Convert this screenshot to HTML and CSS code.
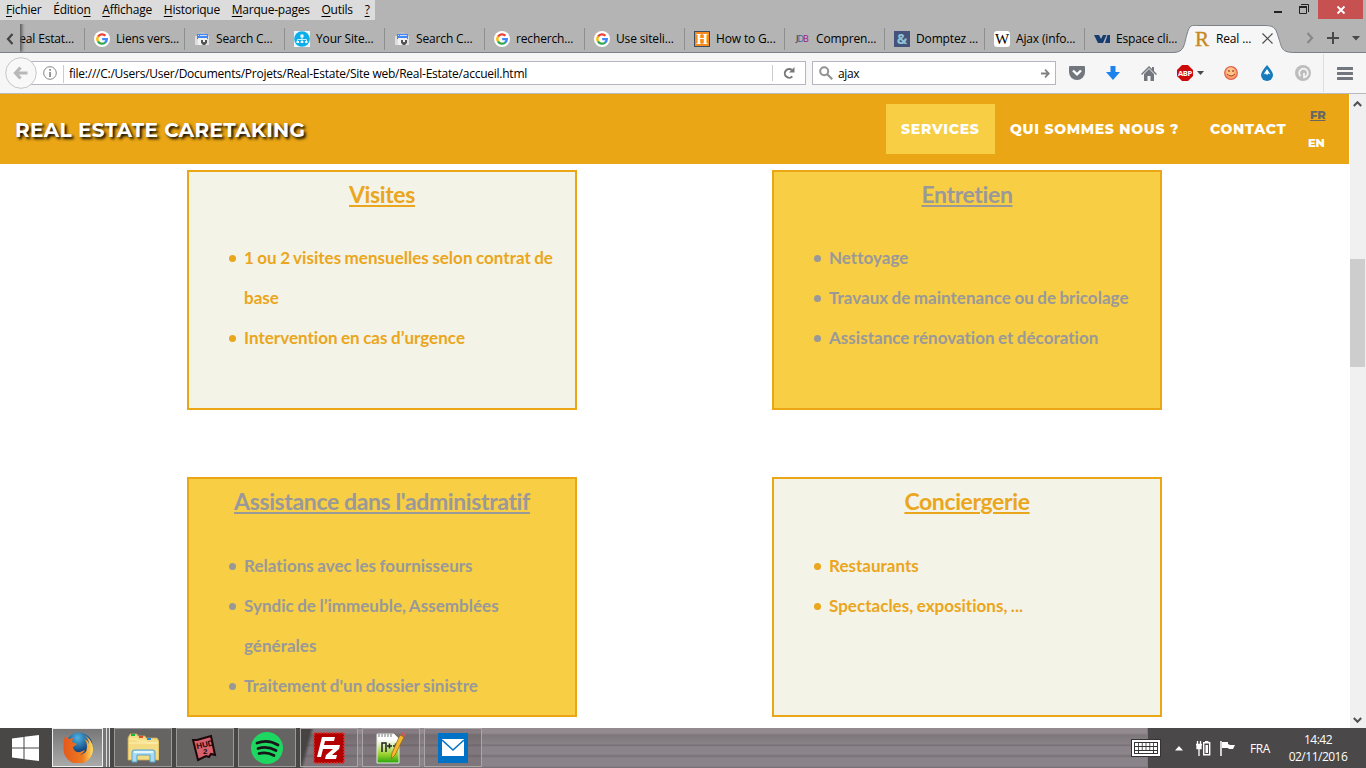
FILE: index.html
```html
<!DOCTYPE html>
<html lang="fr">
<head>
<meta charset="utf-8">
<title>Real Estate Caretaking</title>
<link rel="stylesheet" href="styles.css">
</head>
<body>
<svg width="0" height="0" class="defs">
  <symbol id="google" viewBox="0 0 16 16"><circle cx="8" cy="8" r="8" fill="#fff"/><g fill="none" stroke-width="2.3"><path d="M4 5.6A4.7 4.7 0 0 1 11.4 4.7" stroke="#ea4335"/><path d="M4.2 5.3a4.7 4.7 0 0 0 0 5.4" stroke="#fbbc05"/><path d="M4 10.4a4.7 4.7 0 0 0 7.2 1.1" stroke="#34a853"/><path d="M8.2 8.1h4.6a4.7 4.7 0 0 1-1.7 3.5" stroke="#4285f4"/></g></symbol>
  <symbol id="console" viewBox="0 0 16 16"><path d="M5 2.500q3-2 6 0" stroke="#c8c8c8" fill="none"/><path d="M1 5h14v9H1z" fill="#dedede"/><path d="M3 3h11v5H3z" fill="#4285f4"/><path d="M4 4h1v1H4zm2 0h7v1H6z" fill="#cfe0ff"/><path d="M4 7h9v7H4z" fill="#f0f0f0"/><path d="M7 9v3l2 2h2l2-2V9h-2v2H9V9z" fill="#555"/></symbol>
</svg>

<div class="menubar">
  <nav class="menus"><span><u>F</u>ichier</span><span>Éditio<u>n</u></span><span><u>A</u>ffichage</span><span><u>H</u>istorique</span><span><u>M</u>arque-pages</span><span><u>O</u>utils</span><span><u>?</u></span></nav>
  <div class="wincontrols">
    <svg width="8" height="20"><path d="M0 11h8v2H0z" fill="#222"/></svg>
    <svg width="12" height="20"><path d="M.5 7.500h7v6h-7zM2 4.500h7.500V12" fill="none" stroke="#222"/><path d="M0 6h8v2H0z" fill="#222"/></svg>
    <span class="close"><svg width="10" height="10" viewBox="0 0 10 10"><path d="M1.500 1.500l7 7m0-7l-7 7" stroke="#fff" stroke-width="1.800"/></svg></span>
  </div>
</div>

<div class="tabbar">
  <div class="tabscroll"><svg width="8" height="12" viewBox="0 0 8 12"><path d="M6.500 1L2 6l4.500 5" fill="none" stroke="#444" stroke-width="2.200"/></svg></div>
  <div class="tab cut"><span>Real Estat...</span></div>
  <div class="tab"><svg class="fav"><use href="#google"/></svg><span>Liens vers...</span></div>
  <div class="tab"><svg class="fav"><use href="#console"/></svg><span>Search C...</span></div>
  <div class="tab"><svg class="fav" viewBox="0 0 16 16"><path d="M0 0h16v16H0z" fill="#eaf8fd"/><circle cx="8" cy="8" r="7.800" fill="#09aeea"/><path d="M8 6v3M3.500 11V8.500h9V11M8 9v2" stroke="#c9f0ff" fill="none"/><path d="M6.500 3.500h3v3h-3zM2.500 10h2.500v2H2.500zm4.200 0h2.600v2H6.700zm4.300 0h2.500v2H11z" fill="#fff"/></svg><span>Your Site...</span></div>
  <div class="tab"><svg class="fav"><use href="#console"/></svg><span>Search C...</span></div>
  <div class="tab"><svg class="fav"><use href="#google"/></svg><span>recherch...</span></div>
  <div class="tab"><svg class="fav"><use href="#google"/></svg><span>Use siteli...</span></div>
  <div class="tab"><i class="fav favh">H</i><span>How to G...</span></div>
  <div class="tab"><i class="fav favj">J<b>D</b><em>B</em></i><span>Compren...</span></div>
  <div class="tab"><i class="fav fava">&amp;</i><span>Domptez ...</span></div>
  <div class="tab"><i class="fav favw">W</i><span>Ajax (info...</span></div>
  <div class="tab last"><svg class="fav" viewBox="0 0 16 16"><path d="M0 4h5l2 4 2-4h3.500L9 12H4zM13.500 4H16v8h-5z" fill="#173d70"/></svg><span>Espace cli...</span></div>
  <div class="tab active"><svg class="shape" width="124" height="33" viewBox="0 0 124 33"><path d="M0 32.500C12 32.500 11 24 14 14S18 5.500 26 5.500H92C103 5.500 103 10 106 19S108 32.500 122 32.500V33H0z" fill="#f6f6f7"/><path d="M0 32.500C12 32.500 11 24 14 14S18 5.500 26 5.500H92C103 5.500 103 10 106 19S108 32.500 122 32.500" fill="none" stroke="#7c8189"/></svg><i class="fav favr">R</i><span>Real ...</span><svg class="x" width="11" height="11" viewBox="0 0 11 11"><path d="M.5.5l10 10m0-10l-10 10" stroke="#4c4c4c" stroke-width="1.200"/></svg></div>
  <div class="tabtools">
    <svg width="8" height="12" viewBox="0 0 8 12"><path d="M1.500 1L6 6l-4.500 5" fill="none" stroke="#888" stroke-width="2.200"/></svg>
    <svg width="12" height="12" viewBox="0 0 12 12"><path d="M6 0v12M0 6h12" stroke="#484848" stroke-width="2"/></svg>
    <svg width="8" height="5" viewBox="0 0 8 5"><path d="M0 0h8L4 4.500z" fill="#484848"/></svg>
  </div>
</div>

<div class="toolbar">
  <svg class="back" width="32" height="32" viewBox="0 0 32 32"><circle cx="16" cy="16" r="15.300" fill="#f8f8f8" stroke="#c6c6c8"/><path d="M15.500 10.500L10.500 16l5 5.500M11 16h11.500" fill="none" stroke="#b8b8b8" stroke-width="3.200"/></svg>
  <div class="url">
    <svg width="14" height="14" viewBox="0 0 14 14"><circle cx="7" cy="7" r="6.300" fill="none" stroke="#858585"/><path d="M6.200 6h1.700v5H6.200zM6.200 3h1.700v1.700H6.200z" fill="#858585"/></svg>
    <span class="address">file:///C:/Users/User/Documents/Projets/Real-Estate/Site web/Real-Estate/accueil.html</span>
    <span class="reload"><svg width="12" height="12" viewBox="0 0 12 12"><path d="M9 3.200A4.300 4.300 0 1 0 9.300 9.300" fill="none" stroke="#787878" stroke-width="2"/><path d="M11.500 0v5.500H6z" fill="#787878"/></svg></span>
  </div>
  <div class="search">
    <svg width="14" height="14" viewBox="0 0 14 14"><circle cx="5.200" cy="5.200" r="4" fill="none" stroke="#929292" stroke-width="2"/><path d="M8 8l5.200 5.200" stroke="#929292" stroke-width="2.200"/></svg>
    <span>ajax</span>
    <svg class="go" width="9" height="9" viewBox="0 0 9 9"><path d="M0 4.500h7.500M4 .7l3.800 3.800L4 8.300" fill="none" stroke="#808080" stroke-width="1.800"/></svg>
  </div>
  <div class="tools">
    <svg width="16" height="14" viewBox="0 0 16 14"><path d="M1 0h14q1 0 1 1v5a8 8 0 0 1-16 0V1q0-1 1-1z" fill="#72767d"/><path d="M4 4.500l4 3.800 4-3.800" fill="none" stroke="#fff" stroke-width="2.400"/></svg>
    <svg width="14" height="14" viewBox="0 0 14 14"><path d="M4.500 0h5v6H14l-7 8-7-8h4.500z" fill="#1a83ee"/></svg>
    <svg width="16" height="15" viewBox="0 0 16 15"><path d="M0 8l8-8 3 3V1h2v4l3 3-1 1-7-7-7 7z" fill="#72767d"/><path d="M3 8l5-5 5 5v7H9.500v-5h-3v5H3z" fill="#72767d"/></svg>
    <svg class="abp" width="27" height="16" viewBox="0 0 27 16"><path d="M5 0h6l5 5v6l-5 5H5l-5-5V5z" fill="#cd0a0a"/><text x="8" y="10.800" text-anchor="middle" fill="#fff">ABP</text><path d="M20 6h7l-3.500 4z" fill="#484848"/></svg>
    <svg width="14" height="14" viewBox="0 0 14 14"><circle cx="7" cy="7" r="6.300" fill="#ffa468" stroke="#e0604e" stroke-width="1.200"/><circle cx="6.500" cy="5.500" r="4" fill="#ffc58a"/><circle cx="5" cy="5" r=".9" fill="#a4482c"/><circle cx="9" cy="5" r=".9" fill="#a4482c"/><path d="M3 8q4 4 8 0" fill="none" stroke="#ab4632"/></svg>
    <svg width="12" height="16" viewBox="0 0 12 16"><path d="M6 0q6 7 6 10a6 6 0 0 1-12 0Q0 7 6 0z" fill="#167bbd"/><path d="M6 4l3.500 5.500-2-1L6 10 4.500 8.500l-2 1z" fill="#fff"/></svg>
    <svg width="16" height="16" viewBox="0 0 16 16"><circle cx="8" cy="8" r="8" fill="#bdbdbd"/><path d="M5.600 11.200A4.300 4.300 0 1 1 9 12.300V8" fill="none" stroke="#f4f4f4" stroke-width="1.800"/></svg>
    <span class="burger"><svg width="16" height="13" viewBox="0 0 16 13"><path d="M1 1.500h14M1 6.500h14M1 11.500h14" stroke="#72767d" stroke-width="3" stroke-linecap="round"/></svg></span>
  </div>
</div>

<div class="viewport">
  <main class="page">
    <header class="site">
      <h1>REAL ESTATE CARETAKING</h1>
      <nav class="links"><a class="current"><span>SERVICES</span></a><a class="who"><span>QUI SOMMES NOUS ?</span></a><a class="contact"><span>CONTACT</span></a></nav>
      <div class="langs"><a class="fr">FR</a><a>EN</a></div>
    </header>
    <section class="cards">
      <article class="card"><h2>Visites</h2><ul><li>1 ou 2 visites mensuelles selon contrat de base</li><li>Intervention en cas d’urgence</li></ul></article>
      <article class="card gold"><h2>Entretien</h2><ul><li>Nettoyage</li><li>Travaux de maintenance ou de bricolage</li><li>Assistance rénovation et décoration</li></ul></article>
      <article class="card gold lower"><h2>Assistance dans l'administratif</h2><ul><li>Relations avec les fournisseurs</li><li>Syndic de l’immeuble, Assemblées générales</li><li>Traitement d'un dossier sinistre</li></ul></article>
      <article class="card lower"><h2>Conciergerie</h2><ul><li>Restaurants</li><li>Spectacles, expositions, ...</li></ul></article>
    </section>
  </main>
  <aside class="scrollbar">
    <svg width="9" height="6" viewBox="0 0 9 6"><path d="M.8 5l3.700-3.800L8.200 5" fill="none" stroke="#505050" stroke-width="2"/></svg>
    <div class="thumb"></div>
    <svg width="9" height="6" viewBox="0 0 9 6"><path d="M.8 1l3.700 3.800L8.200 1" fill="none" stroke="#505050" stroke-width="2"/></svg>
  </aside>
</div>

<footer class="taskbar">
  <div class="start"><svg width="27" height="26" viewBox="0 0 27 26"><path d="M0 3.500L11.500 2v10.500H0zM12.500 1.800L27 0v12.500H12.500zM0 13.500h11.500V24L0 22.500zM12.500 13.500H27V26l-14.500-1.800z" fill="#fff"/></svg></div>
  <div class="task firefox"><svg width="30" height="31" viewBox="0 0 30 31"><defs><radialGradient id="blue" cx=".45" cy=".2"><stop offset="0" stop-color="#4fb4e4"/><stop offset="1" stop-color="#124681"/></radialGradient><linearGradient id="fox" x2="1"><stop offset="0" stop-color="#e5581c"/><stop offset=".65" stop-color="#ee7b20"/><stop offset="1" stop-color="#ffdf63"/></linearGradient></defs><circle cx="16" cy="14" r="13.500" fill="url(#blue)"/><path d="M2 4q2 2 4 3l4-1-1 4 5 2-4 3q1 6 7 5l5-2q-2 5-8 5 10 0 10-8 0-6-3-8 4 1 5 5 0-5-5-9 9 5 9 14A14.700 14.700 0 0 1 .5 17Q0 10 2 4z" fill="url(#fox)"/></svg></div>
  <div class="stack"></div>
  <div class="task"><svg width="32" height="30" viewBox="0 0 32 30"><path d="M1 5l2-4h7l1 2h7l1 2h11l2 3v19H1z" fill="#f3dc83" stroke="#c9a850" stroke-width=".8"/><path d="M2 6h8l1 2h8l1 2h11M2 10h28" stroke="#fff1b3" fill="none"/><path d="M4 1h4v2H4z" fill="#15b93b"/><path d="M12 3h4v2h-4z" fill="#e04a2b"/><path d="M20 5h4v2h-4z" fill="#2a8fe4"/><path d="M5 19q0-2 2-2h19q2 0 2 2v10h-5v-7H10v7H5z" fill="#a9daf0" stroke="#5ba4ca"/><path d="M7 18h19v2H7z" fill="#e4f7ff"/></svg></div>
  <div class="task"><svg class="hud" width="28" height="28" viewBox="0 0 28 28"><path d="M2 6l4 0 14-4 4 19-4-1-2 3-3-1-8 4z" fill="#d8616b" stroke="#1c080b" stroke-width="2"/><text x="6" y="15" transform="rotate(-12 6 15)">HUD</text><text x="12" y="20">2</text></svg></div>
  <div class="task"><svg width="32" height="32" viewBox="0 0 32 32"><circle cx="16" cy="16" r="16" fill="#1ed760"/><path d="M6 11q11-4 21 2M7 16.500q9-3 18 2M8 21.500q8-2 15 2" fill="none" stroke="#171717" stroke-width="2.800" stroke-linecap="round"/></svg></div>
  <div class="task"><svg width="32" height="32" viewBox="0 0 32 32"><path d="M1 1h30v30H1z" fill="#b30000" stroke="#d43434" stroke-width="1.500" stroke-dasharray="2 1"/><path d="M9 5h13l-1 4h-9l-1 4h6l-1 4h-6l-2 8H4zM15 13h12l-1 4-7 6h5l-1 4H12l1-4 7-6h-6z" fill="#fff"/></svg></div>
  <div class="task"><svg width="30" height="32" viewBox="0 0 30 32"><defs><linearGradient id="npp" y2="1" x2="0"><stop offset=".2" stop-color="#fff"/><stop offset=".7" stop-color="#9bd22e"/><stop offset="1" stop-color="#25a40b"/></linearGradient></defs><path d="M1 2h17l5 5v24H1z" fill="url(#npp)" stroke="#e4eadf"/><path d="M3 2v3m3-3v3m3-3v3m3-3v3m3-3v3" stroke="#777"/><path d="M6 20v-9h4v9M11 14h5m-2.500-2.500v5M17 14h5m-2.500-2.500v5" stroke="#222" stroke-width="1.500" fill="none"/><path d="M24 3l4 2-9 18-4 4 1-6z" fill="#f6b92c" stroke="#97671b" stroke-width=".8"/><path d="M25 2l1-2 4 2-1 3z" fill="#cf5665"/></svg></div>
  <div class="task"><svg width="30" height="30" viewBox="0 0 30 30"><path d="M0 0h30v30H0z" fill="#0072c6"/><path d="M4 6h22v17H4z" fill="#fff"/><path d="M4 7l11 10 11-10" fill="none" stroke="#0072c6" stroke-width="1.600"/></svg></div>
  <div class="tray">
    <svg class="kbd" width="28" height="16" viewBox="0 0 28 16"><path d="M0 0h28v16H0z" fill="#fff"/><path d="M2 2h24v12H2z" fill="#333"/><path d="M3 4.500h22M3 8.500h22" stroke="#fff" stroke-width="3" stroke-dasharray="3 .8"/><path d="M3 12h3m1 0h14m1 0h3" stroke="#fff" stroke-width="2.200"/></svg>
    <svg class="up" width="8" height="5" viewBox="0 0 8 5"><path d="M4 0l4 4.500H0z" fill="#fff"/></svg>
    <svg class="bat" width="15" height="16" viewBox="0 0 15 16"><path d="M1.500 1v3m3-3v3M0 4.500h6M3 5v11M1 5.500h4v3H1z" fill="#fff" stroke="#fff" stroke-width="1.300"/><path d="M7.700 2.700h6v12h-6z" fill="none" stroke="#fff" stroke-width="1.400"/><path d="M9 1h3.500v1H9zM9.500 5h2.500v8H9.500z" fill="#fff"/></svg>
    <svg class="flag" width="15" height="16" viewBox="0 0 15 16"><path d="M1 1v15" stroke="#fff" stroke-width="1.500"/><path d="M2 2h6v2l2 1h5l-2 4H9L8 8H2z" fill="#fff"/></svg>
    <span class="lang">FRA</span>
    <div class="clock"><span>14:42</span><span>02/11/2016</span></div>
  </div>
</footer>
</body>
</html>
```
FILE: styles.css
```css
* { box-sizing: border-box; }
body { margin: 0; width: 1366px; height: 768px; overflow: hidden; display: flex; flex-direction: column; background: #b4b4b4; font: 12px "Open Sans", "Noto Sans", sans-serif; color: #000; }
svg { display: block; flex: none; }
.defs { position: absolute; }

.menubar { height: 20px; flex: none; display: flex; justify-content: space-between; }
.menus { width: 375px; background: #dcdcdc; display: flex; gap: 11.8px; padding-left: 6px; line-height: 20px; letter-spacing: -.23px; white-space: nowrap; }
.menus u { text-underline-offset: 2px; }
.wincontrols { display: flex; padding-right: 3px; }
.wincontrols > svg:first-child { margin-right: 17px; }
.close { margin-left: 7px; width: 45px; height: 19px; background: #c75050; display: flex; align-items: center; justify-content: center; }

.tabbar { height: 33px; flex: none; display: flex; border-bottom: 1px solid #7c8189; }
.tabscroll { width: 20px; flex: none; padding: 13px 0 0 6px; background: #b4b4b4; box-shadow: 2px 0 3px #555; z-index: 1; clip-path: inset(4px -6px 0 0); }
.tab { width: 100px; height: 32px; flex: none; display: flex; align-items: center; padding: 5px 0 0 9px; gap: 6px; position: relative; white-space: nowrap; letter-spacing: -.15px; background: linear-gradient(#8e8e8e, #8e8e8e) right 8px / 1px 22px no-repeat; }
.tab.cut { width: 65px; padding-left: 0; justify-content: flex-end; padding-right: 11px; }
.tab.last { background: none; }
.tab.active { background: none; }
.fav { width: 16px; height: 16px; flex: none; font-style: normal; text-align: center; }
.favh { background: #f58a1f; border: 1px solid #3b4c5c; color: #fff; font: bold 15px/14px "Liberation Serif", serif; }
.favj { font-size: 9px; line-height: 16px; letter-spacing: -1px; color: #222; }
.favj b { color: #2a5c9a; font-weight: 400; }
.favj em { color: #a0148c; font-style: normal; }
.fava { background: #44527c; color: #8fc3d4; font: bold 14px/16px "Open Sans", sans-serif; }
.favw { background: #fff; border-radius: 3px; font: 15px/16px "Liberation Serif", serif; }
.favr { color: #c8891c; font: 21px/16px "Liberation Serif", serif; -webkit-text-stroke: .4px #c8891c; z-index: 1; }
.tab.active span, .x { z-index: 1; }
.shape { position: absolute; left: -12px; top: 0; }
.x { margin-left: 5px; }
.tabtools { display: flex; align-items: center; gap: 13px; padding: 4px 0 0 21px; }

.toolbar { height: 41px; flex: none; background: #f6f6f7; border-bottom: 1px solid #b9b9bd; display: flex; align-items: center; padding-left: 5px; }
.back { z-index: 1; margin-top: -1px; }
.url { width: 776px; height: 24px; flex: none; margin-left: -7px; background: #fff; border: 1px solid #b4b7c2; display: flex; align-items: center; padding-left: 12px; }
.address { margin-left: 6px; padding-left: 5px; border-left: 1px solid #ccc; line-height: 18px; letter-spacing: -.245px; white-space: nowrap; margin-top: 1px; }
.reload { margin-left: auto; width: 33px; height: 16px; border-left: 1px solid #ccc; display: flex; align-items: center; justify-content: center; }
.search { width: 244px; height: 24px; flex: none; margin-left: 6px; background: #fff; border: 1px solid #b4b7c2; display: flex; align-items: center; padding: 0 5px 0 6px; gap: 5px; letter-spacing: -.4px; }
.go { margin-left: auto; }
.tools { flex: 1; display: flex; align-items: center; align-self: stretch; padding-left: 13px; gap: 21px; }
.tools > .abp { margin-left: -1px; }
.tools > :nth-child(5) { margin-left: -1px; }
.tools > :nth-child(6) { margin-left: 2px; }
.tools > :nth-child(7) { margin-left: 1px; }
.abp text { font: bold 7.5px "Open Sans", sans-serif; letter-spacing: -.3px; }
.tools > .burger { margin: 0 0 0 -9px; width: 43px; height: 38px; border-left: 1px solid #dedede; display: flex; align-items: center; padding-left: 13px; }

.viewport { height: 634px; flex: none; display: flex; background: #fff; }
.page { width: 1349px; margin-right: 1px; }
.site { height: 70px; background: #eaa614; display: flex; align-items: center; color: #fff; font-family: Montserrat, Inter, sans-serif; }
.site h1 { margin: 1px auto 0 15px; font-size: 20px; font-weight: 700; line-height: 24px; white-space: nowrap; text-shadow: 2px 2px 3px #000; letter-spacing: .36px; }
.links { display: flex; }
.links a { height: 50px; display: flex; align-items: center; padding-left: 15px; font-size: 14px; font-weight: 800; letter-spacing: .72px; white-space: nowrap; }
.current { width: 109px; background: #f8ce44; }
.who { width: 200px; }
.contact { width: 107px; }
.langs { width: 47px; display: flex; flex-direction: column; gap: 14px; font-size: 11.5px; line-height: 14px; font-weight: 800; letter-spacing: -.2px; padding-left: 6px; }
.fr { color: #666; text-decoration: underline; padding-left: 2px; }
.links .who { letter-spacing: .68px; }
.cards { display: grid; grid-template-columns: 390px 390px; column-gap: 195px; row-gap: 67px; padding: 6px 0 0 187px; }
.card { height: 240px; border: 2px solid #eaa614; background: #f4f3e7; color: #eaa61c; font-family: Lato, sans-serif; font-weight: 700; font-variant-ligatures: none; }
.gold { background: #f8ce44; color: #999; }
.card h2 { margin: 6px 0 0; font-size: 23px; line-height: 32px; letter-spacing: -.38px; text-align: center; text-decoration-thickness: 2px; text-decoration-line: underline; text-underline-offset: 2px; }
.card ul { margin: 28px 0 0; padding: 0 15px 0 55px; font-size: 17px; line-height: 40px; letter-spacing: .02px; word-spacing: -.7px; list-style: none; }
.card.lower ul { margin-top: 29px; }
.card li::before { content: ""; float: left; width: 7px; height: 7px; margin: 17px 0 0 -15.5px; border-radius: 50%; background: currentColor; }
.scrollbar { width: 16px; background: #f0f0f0; display: flex; flex-direction: column; align-items: center; padding: 7px 1px 5px 0; }
.thumb { width: 15px; height: 108px; background: #cdcdcd; margin: 152px 0 auto; }

.taskbar { height: 40px; flex: none; display: flex; background: linear-gradient(90deg, transparent 1147px, #9d6b70 1147px 1148px, #4a4848 1148px), linear-gradient(105deg, #484746 300px, transparent 304px), linear-gradient(#938a90 0 5px, #7d777a 7px, #898187 16px, #746e72 17px, #8b848b 19px 26px, #777176 28px, #8a8389 30px 38px, #726c70); }
.start { width: 52px; padding: 7px 0 0 12px; }
.task { width: 58px; height: 39px; margin-right: 4px; border: 1px solid #999; background: rgba(255,255,255,.16); display: flex; align-items: center; justify-content: center; }
.task:nth-child(n+7) { background: rgba(60,50,50,.15); border-color: #aaa6a8; }
.firefox { width: 51px; margin: 0; border-color: #eee; background: linear-gradient(#777, #aaa); }
.stack { width: 7px; height: 39px; margin-right: 4px; border-right: 1px solid #ddd; background: linear-gradient(#ddd, #ddd) 3px 0 / 1px 100% no-repeat, #777; }
.hud text { font: bold 8px "Liberation Sans", sans-serif; fill: #1c080b; }
.tray { margin-left: auto; width: 236px; display: flex; align-items: center; color: #fff; padding-left: 2px; }
.kbd { outline: 1px solid #333; }
.up { margin-left: 15px; }
.bat { margin-left: 13px; }
.flag { margin-left: 9px; }
.lang { margin-left: 15px; width: 21px; letter-spacing: -.4px; }
.clock { margin-left: 9px; width: 76px; display: flex; flex-direction: column; align-items: center; line-height: 17px; letter-spacing: -.5px; }
```
